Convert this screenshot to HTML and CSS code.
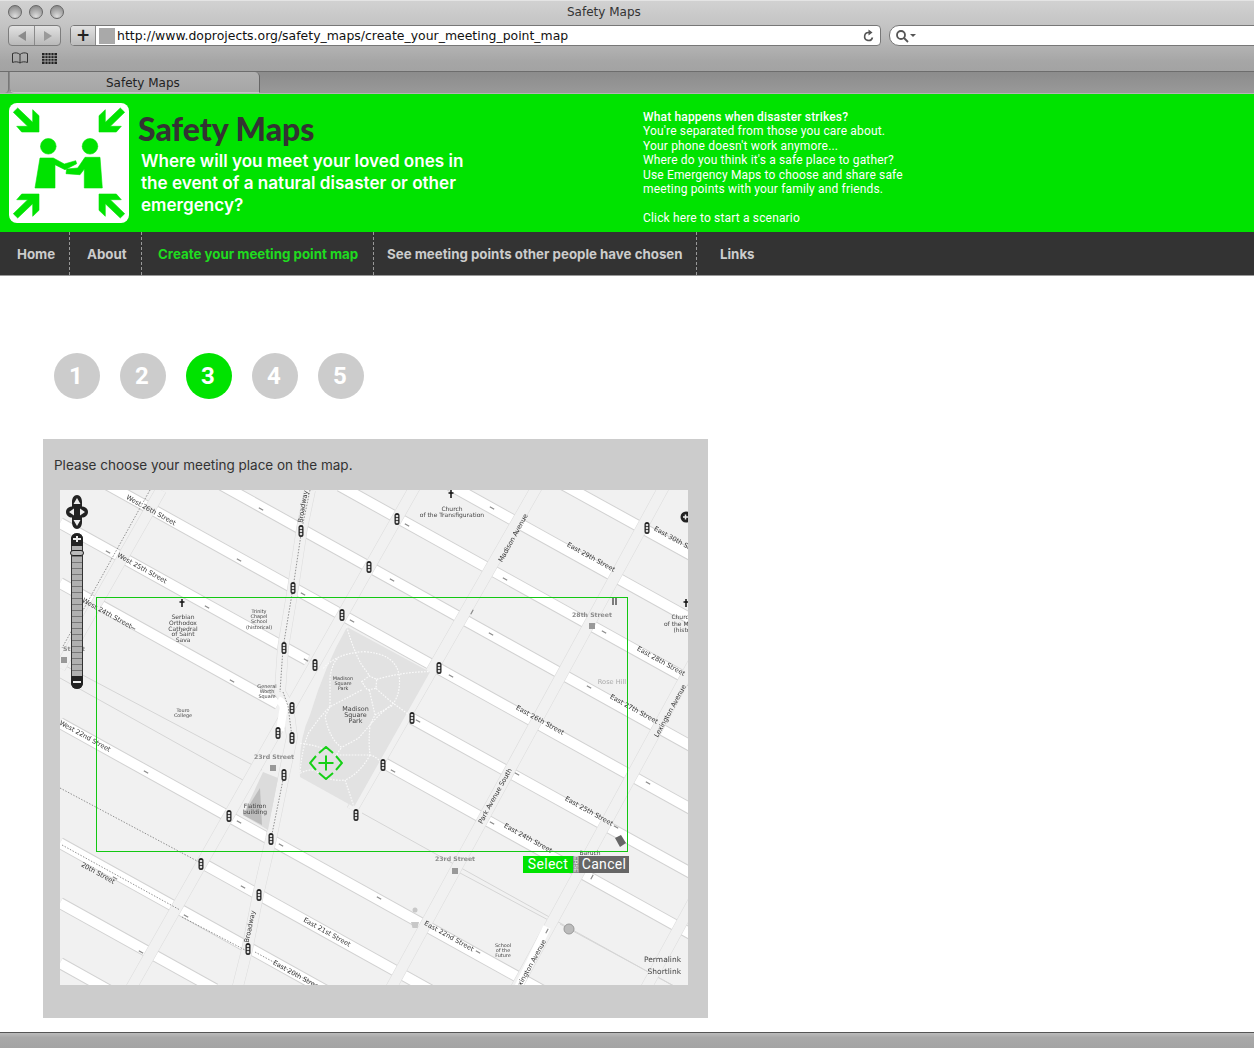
FILE: index.html
```html
<!DOCTYPE html>
<html lang="en">
<head>
<meta charset="utf-8">
<title>Safety Maps</title>
<link rel="stylesheet" href="styles.css">
</head>
<body>
<div class="window">
  <header class="chrome">
    <div class="titlebar">
      <div class="lights"><span class="light"></span><span class="light"></span><span class="light"></span></div>
      <div class="wintitle">Safety Maps</div>
    </div>
    <div class="toolbar">
      <div class="backfwd">
        <span class="navbtn"><svg width="10" height="12" viewBox="0 0 10 12"><path d="M9 1v10L1 6z" class="arrow-a"/></svg></span>
        <span class="navbtn"><svg width="10" height="12" viewBox="0 0 10 12"><path d="M1 1v10l8-5z" class="arrow-b"/></svg></span>
      </div>
      <div class="address">
        <span class="plus">+</span>
        <span class="favicon"></span>
        <span class="url">http://www.doprojects.org/safety_maps/create_your_meeting_point_map</span>
        <svg class="reload" width="12" height="14" viewBox="0 0 12 14"><path d="M9.500 8.500A4 4 0 1 1 6 3.500" class="reload-line"/><path d="M5.500 0.500v6l4-3z" class="reload-head"/></svg>
      </div>
      <div class="search">
        <svg width="22" height="14" viewBox="0 0 22 14"><circle cx="6" cy="6" r="4" class="glass"/><path d="M9 9l4 4" class="glass"/><path d="M15 5h6l-3 3z" class="glass-tip"/></svg>
      </div>
    </div>
    <div class="bookmarks">
      <svg width="18" height="12" viewBox="0 0 18 12"><path d="M9 2.500C7 .5 4 .5 1.500 1.500v9C4 9.500 7 9.500 9 11c2-1.500 5-1.500 7.500-.5v-9C14 .5 11 .5 9 2.500zM9 2.500V11" class="book"/></svg>
      <svg width="15" height="11" viewBox="0 0 15 11" class="gridicon"><path d="M0 0h15v11H0z" class="grid-fill"/><path d="M3 0v11M6 0v11M9 0v11M12 0v11M0 2.700h15M0 5.500h15M0 8.200h15" class="grid-line"/></svg>
    </div>
    <div class="tabstrip">
      <div class="tabstub"></div>
      <div class="tab">Safety Maps</div>
    </div>
  </header>

  <section class="banner">
    <svg class="logo" width="120" height="120" viewBox="0 0 120 120">
      <rect width="120" height="120" rx="8" class="logo-bg"/>
      <g class="logo-mark">
        <path id="arrow" d="M30 29H12.700L7.700 23.300H18.700L4.300 9.300 8.700 5 23.700 19.300V6.700L30 12.700z"/>
        <use href="#arrow" transform="matrix(-1 0 0 1 120 0)"/>
        <use href="#arrow" transform="matrix(1 0 0 -1 0 120)"/>
        <use href="#arrow" transform="matrix(-1 0 0 -1 120 120)"/>
        <circle cx="39.300" cy="43.300" r="7.800"/>
        <circle cx="81" cy="43.300" r="7.800"/>
        <path d="M31 55H44.300L55.300 61 66.700 57.700 67.700 60.700 56 66.700 46 61.700V85H26z"/>
        <path d="M91 54.300H76L68.700 65 57.700 66 57 70.700 71 71.700 75.300 66V85H93.300z"/>
      </g>
    </svg>
    <div class="headline">
      <h1 class="sitename">Safety Maps</h1>
      <p class="tagline">Where will you meet your loved ones in<br>the event of a natural disaster or other<br>emergency?</p>
    </div>
    <div class="intro">
      <strong>What happens when disaster strikes?</strong><br>
      You're separated from those you care about.<br>
      Your phone doesn't work anymore...<br>
      Where do you think it's a safe place to gather?<br>
      Use Emergency Maps to choose and share safe<br>
      meeting points with your family and friends.<br>
      <br>
      Click here to start a scenario
    </div>
  </section>

  <nav class="mainnav">
    <a class="nav-home">Home</a>
    <a class="nav-about">About</a>
    <a class="nav-create">Create your meeting point map</a>
    <a class="nav-see">See meeting points other people have chosen</a>
    <a class="nav-links">Links</a>
  </nav>

  <main class="content">
    <ol class="steps">
      <li class="step">1</li>
      <li class="step">2</li>
      <li class="step step-on">3</li>
      <li class="step">4</li>
      <li class="step">5</li>
    </ol>
    <section class="panel">
      <p class="prompt">Please choose your meeting place on the map.</p>
      <div class="map">
        <svg class="mapart" width="628" height="495" viewBox="60 490 628 495">
          <defs>
            <g id="tl"><rect x="-2.500" y="-6" width="5" height="12" rx="2.500" class="tl-body"/><rect x="-1.200" y="-4" width="2.400" height="2.200" class="tl-lamp"/><rect x="-1.200" y="-1" width="2.400" height="2.200" class="tl-lamp"/><rect x="-1.200" y="2" width="2.400" height="2.200" class="tl-lamp"/></g>
            <g id="ow"><path d="M-2.500 0H2.500" class="oneway"/></g>
          </defs>
          <rect x="60" y="490" width="628" height="495" class="ground"/>

          <g class="thin">
            <path d="M60 663L262 770M60 678L250 784M362 813L688 994M460 873L552 922M560 924L700 1000"/>
          </g>

          <g class="st-case">
            <path d="M563 484.500L700 560M448 484L700 624M340 486L700 686M220 484L700 751M100 480.500L700 814M60 523L307 660M412 718.700L700 878M60 583L278 704M383 762.600L700 939M60 723L700 1078M201 862.600L430 990M60 843L330 993M60 903L215 989M60 963L110 991"/>
          </g>
          <g class="st-fill">
            <path d="M563 484.500L700 560M448 484L700 624M340 486L700 686M220 484L700 751M100 480.500L700 814M60 523L307 660M412 718.700L700 878M60 583L278 704M383 762.600L700 939M60 723L700 1078M201 862.600L430 990M60 843L330 993M60 903L215 989M60 963L110 991"/>
          </g>

          <g class="av-case">
            <path d="M161 490L60 668M416 485L130 990M538 485L352 810M665 485L390 990M790 485L515 990M920 485L645 990"/>
            <path d="M310 490L302 528 293 588 283 648 280 692 288 706 292 737 284 775 271 839 258 895 247 950 237 990"/>
          </g>
          <g class="av-fill">
            <path d="M161 490L60 668M416 485L130 990M538 485L352 810M665 485L390 990M790 485L515 990M920 485L645 990"/>
            <path d="M310 490L302 528 293 588 283 648 280 692 288 706 292 737 284 775 271 839 258 895 247 950 237 990"/>
          </g>
          <path d="M547 927L517 990" class="lex"/>

          <path d="M278 700Q286 704 283 712L280 731" class="bendwhite"/>

          <g class="dots">
            <path d="M150 490L62 648M60 788L199 862M62 845L180 910M182 917L245 950M255 952L325 990"/>
            <path d="M310 490L302 528 293 588 283 648 280 692M283 692L288 706 292 737M284 775L271 839"/>
          </g>

          <path d="M347 627L430 672 354 807 300 777Q298 740 310 715 325 665 347 627z" class="park"/>
          <g transform="translate(280 610) scale(.3333)" class="parkpaths">
            <path d="M245 215L268 198 290 208 288 235 262 240z"/>
            <path d="M200 50Q220 120 245 165 265 190 268 198M290 208Q370 185 450 185"/>
            <path d="M130 175Q170 130 250 125 350 130 358 200 362 250 340 280 300 310 270 345L235 385 185 412"/>
            <path d="M245 240Q190 270 150 290 120 320 85 370 65 420 60 490M150 290V200Q160 150 175 145"/>
            <path d="M268 240L285 315 270 345Q265 400 270 435M288 235Q320 265 340 280L395 320M285 315L340 285"/>
            <path d="M150 290L135 320Q150 390 185 412L165 440M60 400Q110 405 135 420M170 435H270Q290 440 300 455"/>
            <path d="M270 435Q240 490 195 510L222 590M60 490Q100 470 115 490 150 515 195 510"/>
          </g>

          <path d="M263 772L278 778 268 830 243 815z" class="flat-a"/>
          <path d="M260 788L262 825 243 815z" class="flat-b"/>
          <path d="M615 838L621 835 626 843 620 847z" class="bldg"/>
          <rect x="61" y="657" width="6" height="6" class="station"/>
          <rect x="589" y="623" width="6" height="6" class="station"/>
          <rect x="270" y="765" width="6" height="6" class="station"/>
          <rect x="452" y="868" width="6" height="6" class="station"/>
          <circle cx="569" cy="929" r="5" class="poi"/>
          <path d="M411 922h8l-1.500 6h-5z" class="shop"/>
          <circle cx="415" cy="910" r="2.500" class="shop"/>

          <g>
            <use href="#tl" x="397" y="519"/><use href="#tl" x="369" y="567"/><use href="#tl" x="293" y="588"/><use href="#tl" x="342" y="615"/><use href="#tl" x="301" y="531"/><use href="#tl" x="284" y="648"/><use href="#tl" x="315" y="665"/><use href="#tl" x="439" y="668"/><use href="#tl" x="292" y="708"/><use href="#tl" x="278" y="733"/><use href="#tl" x="292" y="738"/><use href="#tl" x="412" y="718"/><use href="#tl" x="284" y="775"/><use href="#tl" x="383" y="765"/><use href="#tl" x="229" y="816"/><use href="#tl" x="271" y="839"/><use href="#tl" x="356" y="815"/><use href="#tl" x="201" y="864"/><use href="#tl" x="259" y="895"/><use href="#tl" x="248" y="949"/><use href="#tl" x="647" y="528"/>
          </g>
          <g class="ows">
            <use href="#ow" transform="translate(492 508) rotate(29)"/><use href="#ow" transform="translate(407 525) rotate(29)"/><use href="#ow" transform="translate(392 580) rotate(29)"/><use href="#ow" transform="translate(505 579) rotate(29)"/><use href="#ow" transform="translate(472 612) rotate(-61)"/><use href="#ow" transform="translate(491 634) rotate(29)"/><use href="#ow" transform="translate(604 632) rotate(29)"/><use href="#ow" transform="translate(589 687) rotate(29)"/><use href="#ow" transform="translate(451 676) rotate(29)"/><use href="#ow" transform="translate(418 721) rotate(29)"/><use href="#ow" transform="translate(261 509) rotate(29)"/><use href="#ow" transform="translate(239 560) rotate(29)"/><use href="#ow" transform="translate(108 552) rotate(29)"/><use href="#ow" transform="translate(207 607) rotate(29)"/><use href="#ow" transform="translate(303 594) rotate(29)"/><use href="#ow" transform="translate(352 621) rotate(29)"/><use href="#ow" transform="translate(306 660) rotate(29)"/><use href="#ow" transform="translate(133 628) rotate(29)"/><use href="#ow" transform="translate(232 681) rotate(29)"/><use href="#ow" transform="translate(146 772) rotate(29)"/><use href="#ow" transform="translate(239 822) rotate(29)"/><use href="#ow" transform="translate(281 845) rotate(29)"/><use href="#ow" transform="translate(243 887) rotate(29)"/><use href="#ow" transform="translate(115 878) rotate(29)"/><use href="#ow" transform="translate(186 916) rotate(29)"/><use href="#ow" transform="translate(141 952) rotate(29)"/><use href="#ow" transform="translate(393 771) rotate(29)"/><use href="#ow" transform="translate(517 774) rotate(29)"/><use href="#ow" transform="translate(492 823) rotate(29)"/><use href="#ow" transform="translate(616 827) rotate(29)"/><use href="#ow" transform="translate(648 783) rotate(29)"/><use href="#ow" transform="translate(592 877) rotate(-61)"/><use href="#ow" transform="translate(379 898) rotate(29)"/><use href="#ow" transform="translate(478 952) rotate(29)"/><use href="#ow" transform="translate(547 931) rotate(-61)"/>
          </g>

          <path d="M451 490v8M448.500 493h5" class="cross"/>
          <path d="M182 599v8M179.500 602h5" class="cross"/>
          <path d="M686 599v8M683.500 602h5" class="cross"/>
          <path d="M613 598v7M616 598v7" class="cross thincross"/>

          <g class="lbl">
            <text transform="translate(150 512) rotate(29)">West 26th Street</text>
            <text transform="translate(141 570) rotate(29)">West 25th Street</text>
            <text transform="translate(106 615) rotate(29)">West 24th Street</text>
            <text transform="translate(84 738) rotate(29)">West 22nd Street</text>
            <text transform="translate(97 875) rotate(29)">20th Street</text>
            <text transform="translate(590 559) rotate(29)">East 29th Street</text>
            <text transform="translate(677 543) rotate(29)">East 30th Street</text>
            <text transform="translate(660 663) rotate(29)">East 28th Street</text>
            <text transform="translate(633 711) rotate(29)">East 27th Street</text>
            <text transform="translate(539 722) rotate(29)">East 26th Street</text>
            <text transform="translate(588 813) rotate(29)">East 25th Street</text>
            <text transform="translate(527 840) rotate(29)">East 24th Street</text>
            <text transform="translate(448 938) rotate(29)">East 22nd Street</text>
            <text transform="translate(326 934) rotate(29)">East 21st Street</text>
            <text transform="translate(296 977) rotate(29)">East 20th Street</text>
            <text transform="translate(305 507) rotate(-80)">Broadway</text>
            <text transform="translate(252 927) rotate(-78)">Broadway</text>
            <text transform="translate(515 539) rotate(-61)">Madison Avenue</text>
            <text transform="translate(672 712) rotate(-61)">Lexington Avenue</text>
            <text transform="translate(497 797) rotate(-61)">Park Avenue South</text>
            <text transform="translate(532 967) rotate(-61)">Lexington Avenue</text>
          </g>
          <g class="lbl lbl-small">
            <text x="452" y="511">Church</text><text x="452" y="517">of the Transfiguration</text>
            <text x="183" y="619">Serbian</text><text x="183" y="625">Orthodox</text><text x="183" y="630.500">Cathedral</text><text x="183" y="636">of Saint</text><text x="183" y="642">Sava</text>
            <text x="259" y="613" class="tiny">Trinity</text><text x="259" y="618" class="tiny">Chapel</text><text x="259" y="623" class="tiny">School</text><text x="259" y="628.500" class="tiny">(historical)</text>
            <text x="267" y="688" class="tiny">General</text><text x="267" y="693" class="tiny">Worth</text><text x="267" y="698" class="tiny">Square</text>
            <text x="183" y="712" class="tiny">Touro</text><text x="183" y="717" class="tiny">College</text>
            <text x="343" y="680" class="tiny">Madison</text><text x="343" y="685" class="tiny">Square</text><text x="343" y="690" class="tiny">Park</text>
            <text x="355.500" y="711" class="big">Madison</text><text x="355.500" y="717" class="big">Square</text><text x="355.500" y="723" class="big">Park</text>
            <text x="255" y="808">Flatiron</text><text x="255" y="814">building</text>
            <text x="503" y="947" class="tiny">School</text><text x="503" y="952" class="tiny">of the</text><text x="503" y="957" class="tiny">Future</text>
            <text x="682" y="619">Church</text><text x="680" y="626">of the Mad</text><text x="682" y="632">(histo</text>
            <text x="590" y="855">Baruch</text>
          </g>
          <g class="lbl lbl-grey">
            <text x="592" y="617">28th Street</text>
            <text x="274" y="759">23rd Street</text>
            <text x="455" y="861">23rd Street</text>
            <text x="74" y="651">Street</text>
          </g>
          <text x="612" y="684" class="rosehill">Rose Hill</text>
          <g class="attr">
            <text x="681" y="962">Permalink</text>
            <text x="681" y="974">Shortlink</text>
          </g>
          <circle cx="686" cy="517" r="5.500" class="ctrl"/>
          <path d="M683 517h5M685.500 514.500v5" class="ctrl-mark"/>
        </svg>

        <svg class="pan" width="26" height="36" viewBox="0 0 26 36">
          <path d="M13 1c3 0 5 3 5 7v4.500c3 0 6 2 6 5.500s-3 5.500-6 5.500V28c0 4-2 7-5 7s-5-3-5-7v-4.500c-3 0-6-2-6-5.500s3-5.500 6-5.500V8c0-4 2-7 5-7z" class="ctrl"/>
          <path d="M13 4l3.500 6h-7zM13 32l-3.500-6h7zM5 18l5-3.500v7zM21 18l-5-3.500v7z" class="ctrl-arrow"/>
        </svg>

        <div class="zoombar">
          <span class="zb-cap zb-top"></span>
          <span class="zb-handle"></span>
          <span class="zb-cap zb-bottom"></span>
        </div>

        <svg class="marker" width="34" height="34" viewBox="0 0 34 34">
          <path d="M10 7l7-6 7 6M27 10l6 7-6 7M24 27l-7 6-7-6M7 24l-6-7 6-7M17 9.500v15M9.500 17h15" class="marker-line"/>
        </svg>

        <div class="selection"></div>
        <div class="choice">
          <button class="btn btn-select">Select</button>
          <span class="btn-gap">ERSE</span>
          <button class="btn btn-cancel">Cancel</button>
        </div>
      </div>
    </section>
  </main>
  <footer class="statusbar"></footer>
</div>
</body>
</html>
```
FILE: styles.css
```css
* { box-sizing: border-box; }
html, body { margin: 0; padding: 0; }
body { background: #fff; font-family: "Roboto", "Liberation Sans", sans-serif; overflow: hidden; }
.window { width: 1254px; height: 1048px; display: flex; flex-direction: column; overflow: hidden; }

/* browser chrome */
.chrome { height: 94px; flex: none; background: linear-gradient(#d2d2d2, #c2c2c2 30%, #a6a6a6 65%, #9c9c9c); font-family: "DejaVu Sans", sans-serif; color: #222; }
.titlebar { height: 22px; display: flex; align-items: center; border-top: 1px solid #e4e4e4; }
.lights { display: flex; gap: 7px; margin-left: 8px; width: 565px; flex: none; }
.light { width: 14px; height: 14px; border-radius: 50%; border: 1px solid #666; background: radial-gradient(circle at 50% 85%, #ddd, #a8a8a8 55%, #7d7d7d); }
.wintitle { font-size: 12px; color: #333; margin-left: -6px; }
.toolbar { height: 25px; display: flex; align-items: center; padding: 3px 0 1px 8px; }
.backfwd { width: 53px; height: 21px; display: flex; border: 1px solid #7d7d7d; border-radius: 4px; background: linear-gradient(#e2e2e2, #b9b9b9); }
.navbtn { flex: 1; display: flex; align-items: center; justify-content: center; }
.navbtn + .navbtn { border-left: 1px solid #8a8a8a; }
.arrow-a { fill: #8b8b8b; }
.arrow-b { fill: #9a9a9a; }
.address { width: 811px; height: 21px; margin-left: 9px; display: flex; align-items: center; border: 1px solid #777; border-radius: 4px; background: #fff; overflow: hidden; }
.plus { width: 25px; height: 100%; background: linear-gradient(#e2e2e2, #bcbcbc); border-right: 1px solid #8a8a8a; text-align: center; font-size: 17px; font-weight: 700; line-height: 18px; color: #222; }
.favicon { width: 16px; height: 16px; margin-left: 3px; background: #a9a9a9; flex: none; }
.url { margin-left: 2px; font-size: 12.450px; color: #111; white-space: nowrap; flex: 1; }
.reload { margin-right: 5px; flex: none; }
.reload-line { fill: none; stroke: #555; stroke-width: 1.600; }
.reload-head { fill: #555; }
.search { flex: 1; height: 21px; margin-left: 8px; margin-right: -12px; display: flex; align-items: center; padding-left: 5px; border: 1px solid #777; border-radius: 10px; background: #fff; }
.glass { fill: none; stroke: #555; stroke-width: 1.800; }
.glass-tip { fill: #555; }
.bookmarks { height: 24px; display: flex; align-items: center; gap: 13px; padding: 0 0 2px 11px; }
.book { fill: none; stroke: #333; stroke-width: 1; }
.grid-fill { fill: #222; }
.grid-line { stroke: #b0b0b0; stroke-width: .8; }
.tabstrip { height: 23px; display: flex; border-top: 1px solid #6d6d6d; background: linear-gradient(#8c8c8c, #999); border-bottom: 1px solid #b5b5b5; }
.tabstub { width: 9px; background: #a8a8a8; border-bottom-right-radius: 4px; border-right: 1px solid #777; }
.tab { width: 251px; background: linear-gradient(#b0b0b0, #a6a6a6); border-right: 1px solid #666; border-left: 1px solid #888; border-bottom: 1px solid #c4c4c4; border-radius: 0 5px 0 5px; font-size: 12px; padding: 4px 0 0 96px; color: #222; }

/* green banner */
.banner { height: 138px; flex: none; display: flex; background: #00e300; }
.logo { flex: none; margin: 9px 0 0 9px; }
.logo-bg { fill: #fff; }
.logo-mark { fill: #00e300; stroke: #00e300; stroke-width: .6; stroke-linejoin: round; }
.headline { width: 505px; flex: none; margin-left: 9px; }
.sitename { margin: 17px 0 0; font-family: "Lato", sans-serif; font-weight: 900; font-size: 32px; line-height: 36px; color: #333; letter-spacing: 0; }
.tagline { margin: 3px 0 0 3px; color: #fff; font-family: "Inter", sans-serif; font-weight: 600; font-size: 17.100px; line-height: 22px; }
.intro { margin-top: 16px; color: #fff; font-size: 12px; line-height: 14.400px; white-space: nowrap; letter-spacing: .16px; }
.intro strong { font-weight: 500; }

/* navigation */
.mainnav { height: 44px; flex: none; display: flex; background: #333; border-bottom: 1px solid #999; font-family: "Inter", sans-serif; font-weight: 700; font-size: 13.300px; line-height: 45px; color: #ccc; white-space: nowrap; }
.mainnav a { display: block; border-right: 1px dashed #999; }
.nav-home { width: 70px; padding-left: 17px; }
.nav-about { width: 72px; padding-left: 17px; }
.mainnav .nav-create { width: 232px; padding-left: 16px; color: #1fdc1f; }
.nav-see { width: 323px; padding-left: 13px; }
.mainnav .nav-links { border-right: 0; padding-left: 23px; }

/* content */
.content { flex: 1; min-height: 0; padding: 77px 0 0 43px; }
.steps { list-style: none; margin: 0 0 0 11px; padding: 0; display: flex; gap: 20px; }
.step { width: 46px; height: 46px; border-radius: 50%; background: #ccc; color: #fff; font-weight: 700; font-size: 24px; line-height: 46px; text-align: center; padding-right: 2px; }
.step-on { background: #00e300; }
.panel { width: 665px; height: 579px; margin-top: 40px; padding: 18px 0 0 11px; background: #ccc; }
.prompt { margin: 0; font-family: "Inter", sans-serif; font-size: 13.500px; line-height: 16px; color: #333; }
.map { position: relative; width: 628px; height: 495px; margin: 17px 0 0 6px; }
.mapart { display: block; filter: blur(.3px); }

/* map art */
.ground { fill: #f1f1f1; }
.thin path { fill: none; stroke: #d5d5d5; stroke-width: 1; }
.st-case path { fill: none; stroke: #d2d2d2; stroke-width: 12; }
.st-fill path { fill: none; stroke: #fff; stroke-width: 10; }
.av-case path { fill: none; stroke: #dcdcdc; stroke-width: 11.500; }
.av-fill path { fill: none; stroke: #f1f1f1; stroke-width: 10.500; }
.lex { fill: none; stroke: #fff; stroke-width: 8; }
.bendwhite { fill: none; stroke: #fff; stroke-width: 8; }
.dots path { fill: none; stroke: #777; stroke-width: .8; stroke-dasharray: 1.500 1.500; }
.park { fill: #e2e2e2; }
.parkpaths path { fill: none; stroke: #fafafa; stroke-width: 3.500; stroke-dasharray: 5 4; }
.flat-a { fill: #dcdcdc; }
.flat-b { fill: #bcbcbc; }
.bldg { fill: #666; }
.station { fill: #999; }
.poi { fill: #bbb; stroke: #999; }
.shop { fill: #c8c8c8; }
.tl-body { fill: #222; }
.tl-lamp { fill: #ddd; }
.oneway { stroke: #8a8a8a; stroke-width: 1.200; }
.cross { fill: none; stroke: #111; stroke-width: 1.500; }
.thincross { stroke: #555; }
.lbl text { font-family: "DejaVu Sans", sans-serif; font-size: 6.600px; fill: #333; text-anchor: middle; }
.lbl-small text { font-size: 6px; fill: #444; }
.lbl-small .tiny { font-size: 4.900px; }
.lbl-small .big { font-size: 6.400px; }
.lbl-grey text { font-size: 6.200px; fill: #8c8c8c; font-weight: 700; }
.rosehill { font-family: "DejaVu Sans", sans-serif; font-size: 6.600px; fill: #aaa; text-anchor: middle; }
.attr text { font-family: "DejaVu Sans", sans-serif; font-size: 7.500px; fill: #444; text-anchor: end; }
.ctrl { fill: #222; }
.ctrl-mark { fill: none; stroke: #eee; stroke-width: 1.500; }
.ctrl-arrow { fill: #eee; }

/* map overlays */
.pan { position: absolute; left: 4px; top: 4px; }
.zoombar { position: absolute; left: 11px; top: 43px; width: 12px; height: 156px; border-radius: 6px; background: repeating-linear-gradient(#b0b0b0 0, #b0b0b0 5px, #777 5px, #777 6px); border-left: 1px solid #333; border-right: 1px solid #333; }
.zb-cap { position: absolute; left: -1px; width: 12px; height: 13px; background: #222; }
.zb-cap::after { content: ""; position: absolute; left: 2px; right: 2px; top: 5px; height: 2px; background: #eee; }
.zb-top { top: 0; border-radius: 6px 6px 0 0; }
.zb-top::before { content: ""; position: absolute; left: 5px; width: 2px; top: 3px; height: 6px; background: #eee; }
.zb-bottom { bottom: 0; border-radius: 0 0 6px 6px; }
.zb-handle { position: absolute; left: -2px; width: 14px; top: 17px; height: 6px; border: 1.500px solid #222; border-radius: 3px; background: #bbb; }
.marker { position: absolute; left: 249px; top: 256px; }
.marker-line { fill: none; stroke: #16d016; stroke-width: 2; }
.selection { position: absolute; left: 36px; top: 107px; width: 532px; height: 255px; border: 1px solid #12c812; }
.choice { position: absolute; left: 463px; top: 366px; display: flex; }
.btn { display: block; height: 17px; padding: 0; border: 0; border-radius: 0; font-family: "Roboto", sans-serif; font-size: 14px; line-height: 17px; color: #fff; letter-spacing: .3px; }
.btn-select { width: 50px; background: #00e300; }
.btn-cancel { width: 50px; background: #666; }
.btn-gap { width: 6px; height: 17px; writing-mode: vertical-rl; font-family: "Liberation Sans", sans-serif; font-size: 6px; line-height: 6px; text-align: center; color: #fff; background: #8a8a8a; }

.statusbar { height: 16px; flex: none; border-top: 1px solid #555; background: linear-gradient(#bbb, #a9a9a9 30%, #a4a4a4); }
```
